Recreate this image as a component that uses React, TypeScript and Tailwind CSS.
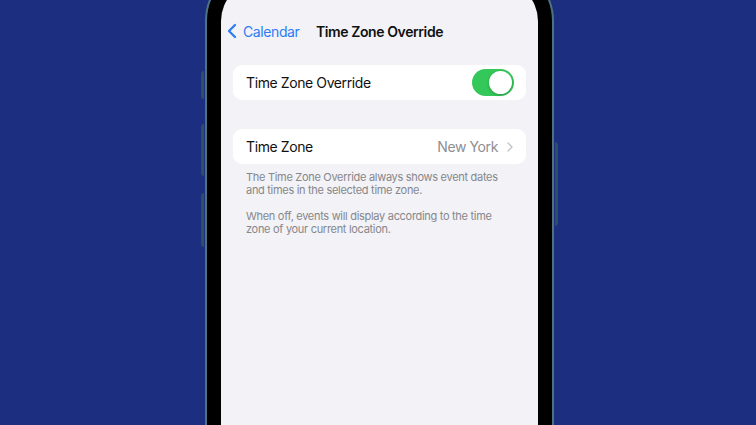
import { ChevronLeft, ChevronRight } from "lucide-react";

const Toggle = () => {
  return (
    <div className="flex h-[27px] w-[42px] items-center justify-end rounded-full bg-[#34c759] p-[2px]">
      <div className="h-[23px] w-[23px] rounded-full bg-white shadow-[0_1px_3px_rgba(0,0,0,0.25)]"></div>
    </div>
  );
};

const App = () => {
  return (
    <div
      className="h-[425px] w-[756px] overflow-hidden bg-[#1c2e7f] pl-[205px]"
      style={{ fontFamily: "Inter, 'Noto Sans', sans-serif" }}
    >
      <div className="relative -mt-[35px] h-[520px] w-[349px] rounded-[56px] border-2 border-[#4d7383] bg-black p-[14px]">
        {/* side buttons */}
        <div className="absolute left-[-6px] top-[104px] h-[28px] w-[3px] rounded-l bg-[#2f4f63]"></div>
        <div className="absolute left-[-6px] top-[157px] h-[52px] w-[3px] rounded-l bg-[#2f4f63]"></div>
        <div className="absolute left-[-6px] top-[226px] h-[54px] w-[3px] rounded-l bg-[#2f4f63]"></div>
        <div className="absolute right-[-6px] top-[175px] h-[84px] w-[3px] rounded-r bg-[#2f4f63]"></div>

        <div className="h-full w-full rounded-[40px] bg-[#f2f2f7] pt-[40px] tracking-[-0.4px]">
          <div className="relative flex h-[20px] items-center">
            <div className="absolute left-[-1px] flex items-center text-[#2f7cf3]">
              <ChevronLeft size={24} strokeWidth={2.3} />
              <span className="ml-[-1px] text-[14px]">Calendar</span>
            </div>
            <div className="w-full text-center text-[14px] font-semibold text-[#111]">Time Zone Override</div>
          </div>

          <div className="mt-[24px] px-[12px]">
            <div className="flex h-[35px] items-center justify-between rounded-[9px] bg-white pl-[13px] pr-[12px]">
              <span className="text-[14px] text-[#111]">Time Zone Override</span>
              <Toggle />
            </div>

            <div className="mt-[29px] flex h-[35px] items-center justify-between rounded-[9px] bg-white pl-[13px] pr-[8px]">
              <span className="text-[14px] text-[#111]">Time Zone</span>
              <div className="flex items-center text-[#8e8e93]">
                <span className="text-[14px]">New York</span>
                <ChevronRight size={16} strokeWidth={2} className="ml-[4px] text-[#c4c4c7]" />
              </div>
            </div>

            <div className="mt-[7px] px-[13px] text-[11px] leading-[13px] tracking-[-0.3px] text-[#87878b]">
              <p>The Time Zone Override always shows event dates and times in the selected time zone.</p>
              <p className="mt-[13px]">When off, events will display according to the time zone of your current location.</p>
            </div>
          </div>
        </div>
      </div>
    </div>
  );
};

export default App;
